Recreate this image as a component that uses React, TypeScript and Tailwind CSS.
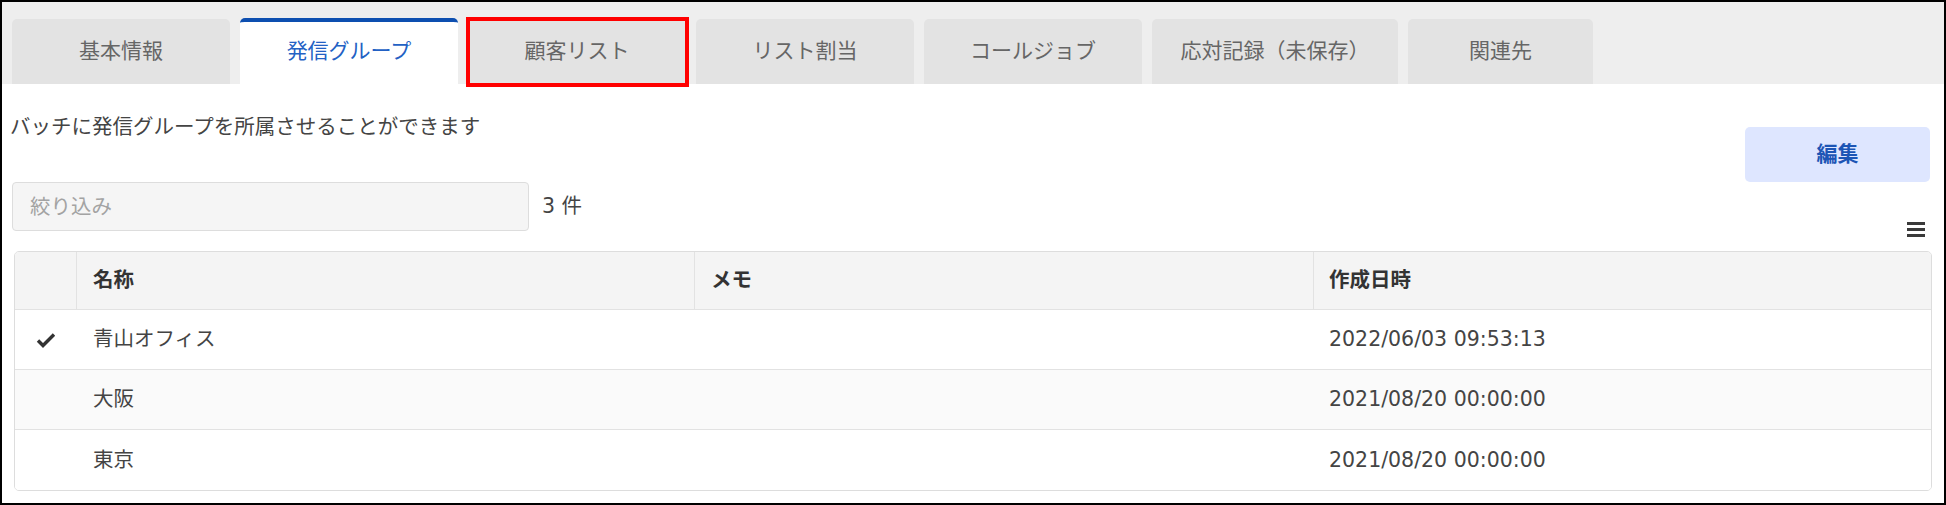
import { useState } from "react";

const tabs = [
  { label: "基本情報", width: "w-[218px]" },
  { label: "発信グループ", width: "w-[218px]", active: true },
  { label: "顧客リスト", width: "w-[218px]", marked: true },
  { label: "リスト割当", width: "w-[218px]" },
  { label: "コールジョブ", width: "w-[218px]" },
  { label: "応対記録（未保存）", width: "w-[246px]" },
  { label: "関連先", width: "w-[185px]" },
];

const rows = [
  { name: "青山オフィス", memo: "", created: "2022/06/03 09:53:13", checked: true },
  { name: "大阪", memo: "", created: "2021/08/20 00:00:00" },
  { name: "東京", memo: "", created: "2021/08/20 00:00:00" },
];

function CheckMark() {
  return (
    <svg width="20" height="16" viewBox="0 0 20 16" fill="none">
      <path d="M2 8.5 L7 13.5 L18 2.5" stroke="#333" strokeWidth="3.4" strokeLinejoin="miter" />
    </svg>
  );
}

export default function App() {
  const [filter, setFilter] = useState("");

  return (
    <div className="h-[505px] w-[1946px] overflow-hidden border-2 border-black bg-white font-['DejaVu_Sans','Noto_Sans_CJK_JP',sans-serif] text-[20.5px] text-[#444]">
      {/* tabs */}
      <div className="flex h-[82px] items-end gap-[10px] bg-[#eeeeee] pl-[10px]">
        {tabs.map((t) =>
          t.active ? (
            <div
              key={t.label}
              className={`${t.width} flex h-[66px] items-center justify-center rounded-t-[5px] border-t-4 border-[#0d4fb0] bg-white pb-[2px] text-[21px] text-[#2361c4]`}
            >
              {t.label}
            </div>
          ) : (
            <div
              key={t.label}
              className={`${t.width} relative flex h-[65px] items-center justify-center rounded-t-[5px] bg-[#e3e3e3] text-[21px] text-[#666]`}
            >
              {t.label}
              {t.marked && (
                <div className="pointer-events-none absolute -top-[2px] -bottom-[3px] -left-[2px] -right-[3px] border-4 border-[#ff0000]" />
              )}
            </div>
          )
        )}
      </div>

      <div className="pl-[10px] pr-[14px]">
        <div className="flex items-start justify-between pt-[28px]">
          <p className="-ml-[2px] leading-[30px] text-[#444]">バッチに発信グループを所属させることができます</p>
          <button className="mt-[15px] h-[55px] w-[185px] rounded-[5px] bg-[#dee6ff] text-[21px] font-bold text-[#1c55b5]">
            編集
          </button>
        </div>

        <div className="flex items-start justify-between">
          <div className="flex items-center">
            <input
              value={filter}
              onChange={(e) => setFilter(e.target.value)}
              placeholder="絞り込み"
              className="h-[49px] w-[517px] rounded-[4px] border border-[#dddddd] bg-[#f5f5f5] px-[17px] text-[20.5px] outline-none placeholder:text-[#a3a3a3]"
            />
            <span className="ml-[13px] text-[#444]">3 件</span>
          </div>
          <div className="mt-[40px] mr-[5px] flex flex-col gap-[3px]">
            <div className="h-[3px] w-[18px] bg-[#3a3a3a]" />
            <div className="h-[3px] w-[18px] bg-[#3a3a3a]" />
            <div className="h-[3px] w-[18px] bg-[#3a3a3a]" />
          </div>
        </div>

        <div className="mt-[14px] ml-[2px] w-[1918px] overflow-hidden rounded-[5px] border border-[#dddddd]">
          <div className="grid h-[58px] grid-cols-[61px_618px_619px_1fr] border-b border-[#e2e2e2] bg-[#f4f4f4] font-bold text-[#333]">
            <div />
            <div className="flex items-center border-l border-[#e2e2e2] pl-[16px]">名称</div>
            <div className="flex items-center border-l border-[#e2e2e2] pl-[16px]">メモ</div>
            <div className="flex items-center border-l border-[#e2e2e2] pl-[15px]">作成日時</div>
          </div>
          {rows.map((r, i) => (
            <div
              key={r.name}
              className={`grid h-[60px] grid-cols-[61px_618px_619px_1fr] ${i < rows.length - 1 ? "border-b border-[#e2e2e2]" : ""} ${i % 2 === 1 ? "bg-[#fafafa]" : "bg-white"}`}
            >
              <div className="flex items-center justify-center">{r.checked && <CheckMark />}</div>
              <div className="flex items-center pl-[17px]">{r.name}</div>
              <div className="flex items-center pl-[17px]">{r.memo}</div>
              <div className="flex items-center pl-[16px]">{r.created}</div>
            </div>
          ))}
        </div>
      </div>
    </div>
  );
}
